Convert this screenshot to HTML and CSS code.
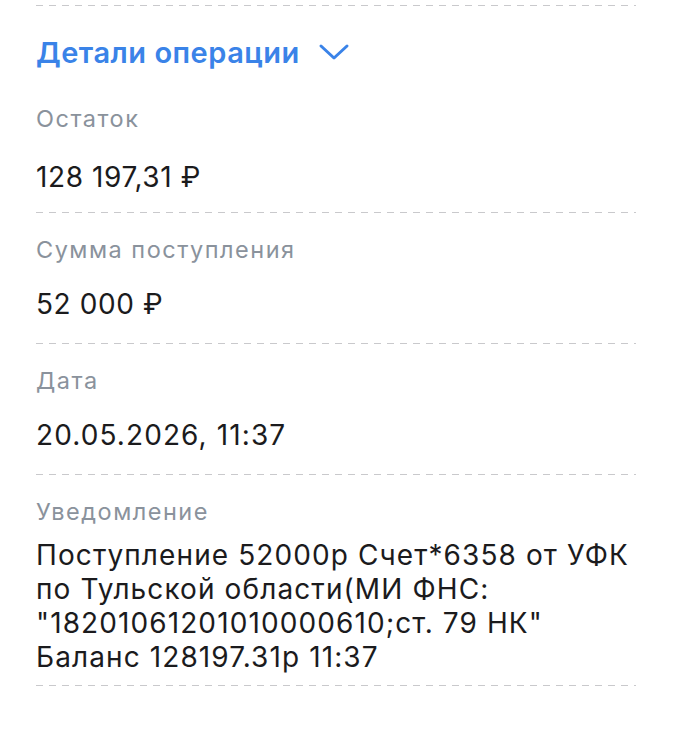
FILE: index.html
```html
<!DOCTYPE html>
<html lang="ru">
<head>
<meta charset="utf-8">
<title>Детали операции</title>
<link rel="stylesheet" href="styles.css">
</head>
<body>
<main class="panel">
  <div class="rule"></div>
  <div class="header">
    <h2 class="title">Детали операции</h2>
    <svg class="chevron" width="32" height="20" viewBox="0 0 32 20" aria-hidden="true">
      <path d="M3 4 L16 16 L29 4" fill="none" stroke="#3a83e8" stroke-width="3" stroke-linecap="round" stroke-linejoin="round"/>
    </svg>
  </div>
  <section class="field field--first">
    <div class="label">Остаток</div>
    <div class="value">128 197,31 ₽</div>
  </section>
  <div class="rule"></div>
  <section class="field">
    <div class="label">Сумма поступления</div>
    <div class="value">52 000 ₽</div>
  </section>
  <div class="rule"></div>
  <section class="field">
    <div class="label">Дата</div>
    <div class="value value--date">20.05.2026, 11:37</div>
  </section>
  <div class="rule"></div>
  <section class="field field--note">
    <div class="label">Уведомление</div>
    <div class="note">Поступление 52000р Счет*6358 от УФК<br>по Тульской области(МИ ФНС:<br>"18201061201010000610;ст. 79 НК"<br>Баланс 128197.31р 11:37</div>
  </section>
  <div class="rule"></div>
</main>
</body>
</html>
```
FILE: styles.css
```css
html, body {
  margin: 0;
  padding: 0;
  background: #ffffff;
}

body {
  font-family: Inter, "Noto Sans", "Liberation Sans", sans-serif;
  color: #1b1b1d;
}

.panel {
  width: 600px;
  padding: 5px 0 0 36px;
  display: flex;
  flex-direction: column;
}

.rule {
  height: 1px;
  background: repeating-linear-gradient(to right, #c9c9cc 0 7px, transparent 7px 13px);
}

.header {
  display: flex;
  align-items: center;
  gap: 18px;
  margin-top: 27px;
  height: 40px;
}

.title {
  margin: 0;
  font-size: 29px;
  line-height: 40px;
  font-weight: 600;
  letter-spacing: 0.5px;
  color: #3a83e8;
  white-space: nowrap;
}

.chevron {
  display: block;
  margin-top: -2px;
}

.field {
  display: flex;
  flex-direction: column;
  padding: 23px 0 22px;
}

.field--first {
  padding-top: 32px;
  padding-bottom: 18px;
}

.label {
  font-size: 23.5px;
  line-height: 28px;
  letter-spacing: 1.5px;
  color: #8a929c;
}

.value {
  margin-top: 23px;
  font-size: 28px;
  line-height: 34px;
  letter-spacing: 0.6px;
  color: #1b1b1d;
}

.value--date {
  letter-spacing: 1.1px;
}

.field--first .value {
  margin-top: 27px;
}

.field--note {
  padding-bottom: 11px;
}

.note {
  margin-top: 12px;
  font-size: 28px;
  line-height: 34px;
  letter-spacing: 1.1px;
  color: #1b1b1d;
  white-space: nowrap;
}
```
